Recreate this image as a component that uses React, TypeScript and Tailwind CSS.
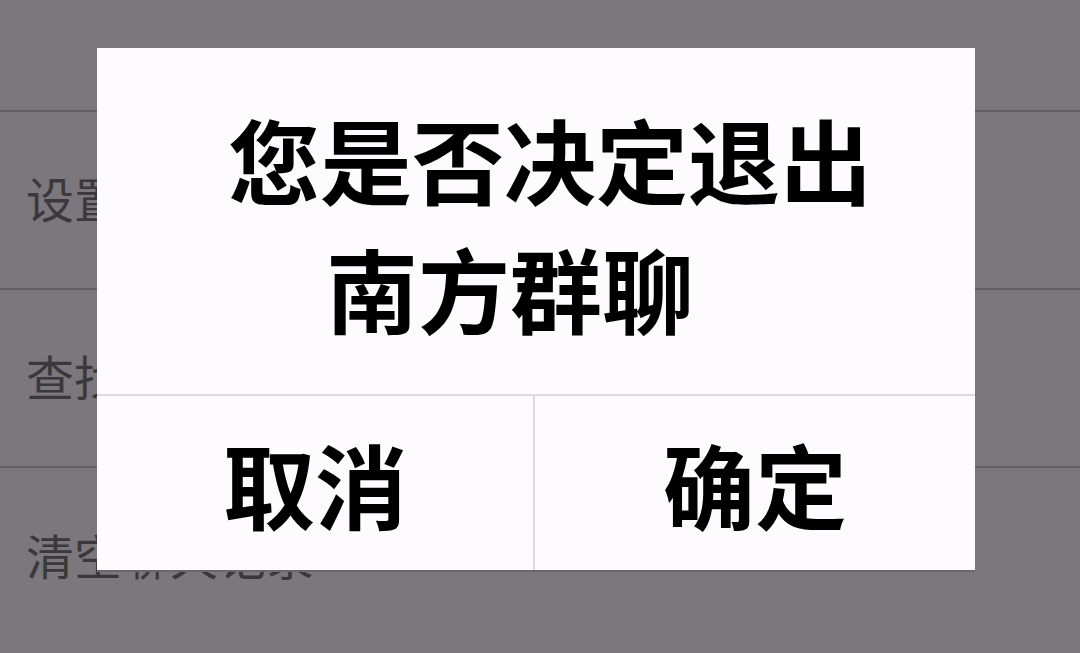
const rows = ['设置当前聊天背景', '查找聊天内容', '清空聊天记录'];

function SettingsList() {
  return (
    <div className="flex flex-col">
      <div className="h-[112px] border-b-2 border-[#625e63]" />
      {rows.map((label, i) => (
        <div
          key={label}
          className={`flex h-[178px] items-center pl-[26px] ${
            i < rows.length - 1 ? 'border-b-2 border-[#625e63]' : ''
          }`}
        >
          <span className="-mt-[6px] text-[48px] leading-none text-[#3a383c]">{label}</span>
        </div>
      ))}
    </div>
  );
}

function ConfirmDialog() {
  return (
    <div className="absolute left-[97px] top-[48px] flex h-[524px] w-[878px] flex-col border-b-2 border-[#6a666b] bg-[#fdfbfd]">
      <div className="flex h-[346px] flex-col pt-[45px] text-[92px] font-bold text-black">
        <div className="h-[129px] pl-[131px] leading-[129px]">您是否决定退出</div>
        <div className="h-[129px] pl-[229px] leading-[129px]">南方群聊</div>
      </div>
      <div className="flex flex-1 border-t-2 border-[#dcdadc] text-[92px] font-bold text-black">
        <button className="flex w-[438px] items-center justify-center border-r-2 border-[#dcdadc] leading-none">
          取消
        </button>
        <button className="flex flex-1 items-center justify-center leading-none">
          确定
        </button>
      </div>
    </div>
  );
}

export default function App() {
  return (
    <div
      className="relative h-[653px] w-full overflow-hidden bg-[#7b777c]"
      style={{ fontFamily: '"Noto Sans CJK SC", "Noto Sans", sans-serif' }}
    >
      <SettingsList />
      <ConfirmDialog />
    </div>
  );
}
